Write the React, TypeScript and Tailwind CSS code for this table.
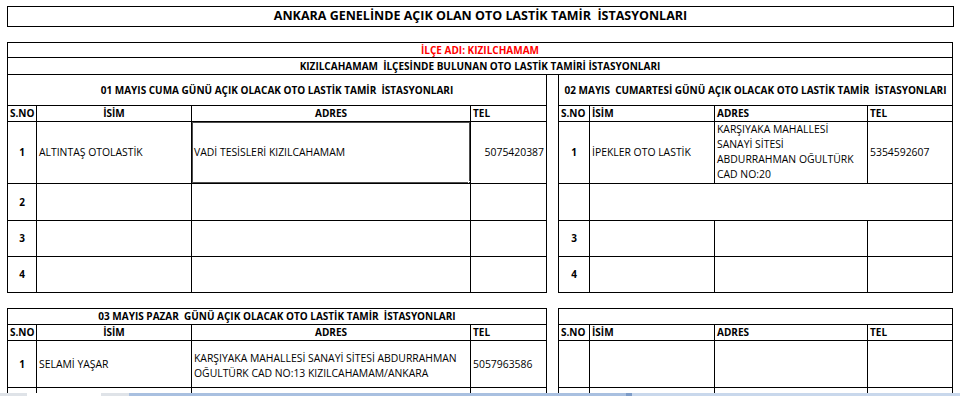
import React from 'react';

// Spreadsheet-style duty roster of tyre repair shops (Kızılcahamam)

type Align = 'left' | 'center' | 'right';

const alignClass: Record<Align, string> = {
  left: 'justify-start text-left pl-[2px]',
  center: 'justify-center text-center',
  right: 'justify-end text-right pr-[2px]',
};

const Cell: React.FC<{
  children?: React.ReactNode;
  align?: Align;
  bold?: boolean;
  className?: string;
}> = ({ children, align = 'left', bold = false, className = '' }) => (
  <div
    className={`bg-white flex items-center overflow-hidden whitespace-nowrap leading-[15px] ${alignClass[align]} ${
      bold ? 'font-bold text-[10px]' : ''
    } ${className}`}
  >
    {children}
  </div>
);

const SectionTitle: React.FC<{ text?: string }> = ({ text }) => (
  <Cell align="center" bold className="col-span-4 whitespace-pre">
    {text}
  </Cell>
);

export default function App() {
  return (
    <div className="relative w-[960px] h-[396px] overflow-hidden bg-white text-black font-['Open_Sans',sans-serif] text-[10.4px]">
      <div className="pt-[6px] pl-[7px]">
        {/* Title */}
        <div className="w-[947px] h-[21px] border border-black flex items-center justify-center text-[12.5px] font-bold whitespace-pre">
          ANKARA GENELİNDE AÇIK OLAN OTO LASTİK TAMİR  İSTASYONLARI
        </div>

        {/* Upper block */}
        <div className="mt-[15px] w-[946px]">
          <div className="border border-black text-[10px] font-bold">
            <div className="h-[15px] flex items-center justify-center text-[#ff0000] border-b border-black">
              İLÇE ADI: KIZILCHAMAM
            </div>
            <div className="h-[16px] flex items-center justify-center whitespace-pre">
              KIZILCAHAMAM  İLÇESİNDE BULUNAN OTO LASTİK TAMİRİ İSTASYONLARI
            </div>
          </div>

          <div className="flex gap-[11px]">
            {/* 01 Mayıs */}
            <div className="grid grid-cols-[28px_154px_278px_75px] grid-rows-[30px_15px_61px_36px_35px_35px] gap-px bg-black border border-black border-t-0">
              <SectionTitle text="01 MAYIS CUMA GÜNÜ AÇIK OLACAK OTO LASTİK TAMİR  İSTASYONLARI" />
              <Cell bold>S.NO</Cell>
              <Cell bold align="center">İSİM</Cell>
              <Cell bold align="center">ADRES</Cell>
              <Cell bold>TEL</Cell>

              <Cell bold align="center">1</Cell>
              <Cell>ALTINTAŞ OTOLASTİK</Cell>
              <Cell className="relative">
                VADİ TESİSLERİ KIZILCAHAMAM
                <div className="absolute -inset-px border-2 border-[#4d4d4d]" />
                <div className="absolute -right-[3px] -bottom-[3px] w-[5px] h-[5px] bg-[#333] border border-white" />
              </Cell>
              <Cell align="right">5075420387</Cell>

              <Cell bold align="center">2</Cell>
              <Cell />
              <Cell />
              <Cell />

              <Cell bold align="center">3</Cell>
              <Cell />
              <Cell />
              <Cell />

              <Cell bold align="center">4</Cell>
              <Cell />
              <Cell />
              <Cell />
            </div>

            {/* 02 Mayıs */}
            <div className="grid grid-cols-[30px_124px_152px_84px] grid-rows-[30px_15px_61px_36px_35px_35px] gap-px bg-black border border-black border-t-0">
              <SectionTitle text="02 MAYIS  CUMARTESİ GÜNÜ AÇIK OLACAK OTO LASTİK TAMİR  İSTASYONLARI" />
              <Cell bold>S.NO</Cell>
              <Cell bold>İSİM</Cell>
              <Cell bold>ADRES</Cell>
              <Cell bold>TEL</Cell>

              <Cell bold align="center">1</Cell>
              <Cell>İPEKLER OTO LASTİK</Cell>
              <Cell className="flex-col !items-start justify-center pb-[4px]">
                <span className="leading-[15px]">KARŞIYAKA MAHALLESİ</span>
                <span className="leading-[15px]">SANAYİ SİTESİ</span>
                <span className="leading-[15px]">ABDURRAHMAN OĞULTÜRK</span>
                <span className="leading-[15px]">CAD NO:20</span>
              </Cell>
              <Cell>5354592607</Cell>

              <Cell />
              <Cell className="col-span-3" />

              <Cell bold align="center">3</Cell>
              <Cell />
              <Cell />
              <Cell />

              <Cell bold align="center">4</Cell>
              <Cell />
              <Cell />
              <Cell />
            </div>
          </div>
        </div>

        {/* Lower block */}
        <div className="mt-[15px] flex gap-[11px]">
          {/* 03 Mayıs */}
          <div className="grid grid-cols-[28px_154px_278px_75px] grid-rows-[15px_15px_46px_36px] gap-px bg-black border border-black">
            <SectionTitle text="03 MAYIS PAZAR  GÜNÜ AÇIK OLACAK OTO LASTİK TAMİR  İSTASYONLARI" />
            <Cell bold>S.NO</Cell>
            <Cell bold align="center">İSİM</Cell>
            <Cell bold align="center">ADRES</Cell>
            <Cell bold>TEL</Cell>

            <Cell bold align="center">1</Cell>
            <Cell>SELAMİ YAŞAR</Cell>
            <Cell className="flex-col !items-start justify-start pt-[10px]">
              <span className="leading-[15px]">KARŞIYAKA MAHALLESİ SANAYİ SİTESİ ABDURRAHMAN</span>
              <span className="leading-[15px]">OĞULTÜRK CAD NO:13 KIZILCAHAMAM/ANKARA</span>
            </Cell>
            <Cell>5057963586</Cell>

            <Cell />
            <Cell />
            <Cell />
            <Cell />
          </div>

          {/* empty table */}
          <div className="grid grid-cols-[30px_124px_152px_84px] grid-rows-[15px_15px_46px_36px] gap-px bg-black border border-black">
            <SectionTitle />
            <Cell bold>S.NO</Cell>
            <Cell bold>İSİM</Cell>
            <Cell bold>ADRES</Cell>
            <Cell bold>TEL</Cell>

            <Cell />
            <Cell />
            <Cell />
            <Cell />

            <Cell />
            <Cell />
            <Cell />
            <Cell />
          </div>
        </div>
      </div>

      {/* sheet tabs / scrollbar strip of the window below */}
      <div className="absolute left-0 bottom-0 w-full h-[3px] flex">
        <div className="w-[27px] bg-[#dfe3e8]" />
        <div className="w-[74px] bg-white" />
        <div className="w-[28px] bg-[#dfe3e8]" />
        <div className="w-[497px] bg-[#a9c0e0]" />
        <div className="w-[6px] bg-[#7d9cc8]" />
        <div className="flex-1 bg-[#c9d8ec]" />
      </div>
    </div>
  );
}
